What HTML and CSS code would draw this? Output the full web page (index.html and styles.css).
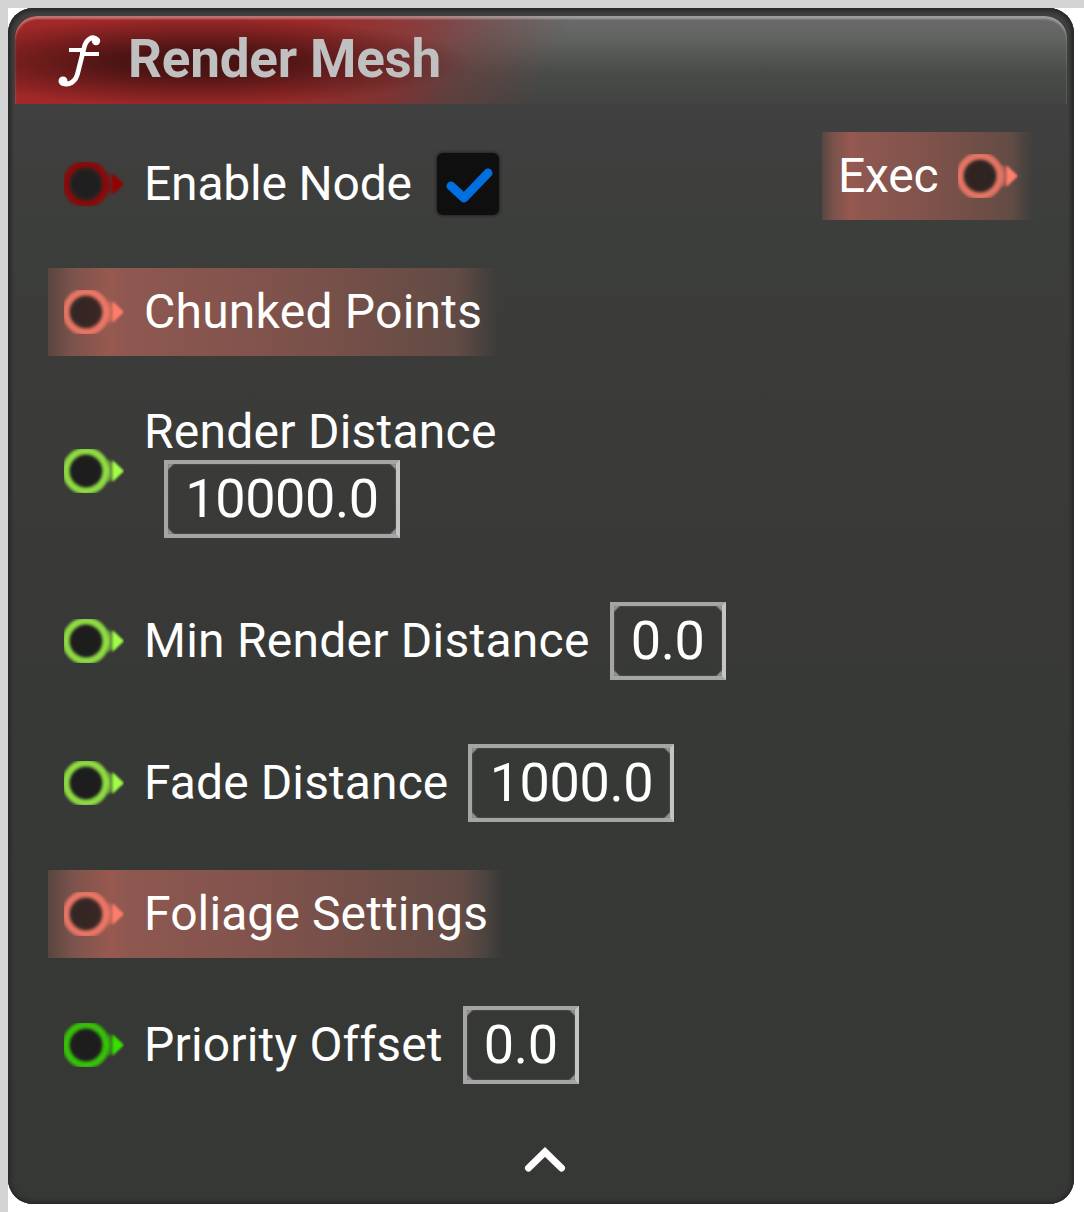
FILE: index.html
```
<!DOCTYPE html>
<html lang="en">
<head>
<meta charset="utf-8">
<title>Render Mesh</title>
<link rel="stylesheet" href="styles.css">
</head>
<body>
<svg class="defs" width="0" height="0" aria-hidden="true">
  <defs>
    <radialGradient id="hole" gradientUnits="userSpaceOnUse" cx="22" cy="22" r="18">
      <stop offset="0.7" stop-color="#111" stop-opacity=".68"/>
      <stop offset="1" stop-color="#111" stop-opacity=".4"/>
    </radialGradient>
    <symbol id="pin" viewBox="0 0 60 44">
      <g class="soft">
        <circle cx="22" cy="22" r="18" fill="url(#hole)"/>
        <circle cx="22" cy="22" r="20" fill="none" stroke="currentColor" stroke-width="8" opacity=".6"/>
        <circle cx="22" cy="22" r="20" fill="none" stroke="currentColor" stroke-width="4" opacity=".6"/>
        <path d="M44 10L57 22L44 34Z" fill="currentColor" opacity=".4"/>
        <path d="M48.500 11L60 22L48.500 33Z" fill="currentColor"/>
      </g>
    </symbol>
  </defs>
</svg>
<main class="node">
  <header class="header">
    <svg class="func" width="46" height="58" viewBox="0 0 46 58">
      <path d="M41 9C37 4 30 8 28 17L22 41C20 51 13 55 6 52" fill="none" stroke="#fff" stroke-width="4.800"/>
      <circle cx="40" cy="10" r="4.200" fill="#fff"/>
      <circle cx="7" cy="50" r="4.500" fill="#fff"/>
      <path d="M13 19H27M24 23H43" stroke="#fff" stroke-width="4"/>
    </svg>
    <h1 class="title">Render Mesh</h1>
  </header>
  <div class="body">
    <div class="inputs">
      <div class="row enable"><svg class="pin red"><use href="#pin"/></svg><span class="label tight">Enable Node</span>
        <span class="check"><svg width="62" height="62" viewBox="0 0 62 62"><path d="M14 33L27 45L51 20" fill="none" stroke="#0070e0" stroke-width="9" stroke-linecap="round" stroke-linejoin="round"/></svg></span>
      </div>
      <div class="row glow chunked"><svg class="pin salmon"><use href="#pin"/></svg><span class="label loose">Chunked Points</span></div>
      <div class="row distance"><svg class="pin lime"><use href="#pin"/></svg>
        <div class="stack"><span class="label loose">Render Distance</span><span class="field wide">10000.0</span></div>
      </div>
      <div class="row min"><svg class="pin lime"><use href="#pin"/></svg><span class="label loose">Min Render Distance</span><span class="field short">0.0</span></div>
      <div class="row fade"><svg class="pin lime"><use href="#pin"/></svg><span class="label even">Fade Distance</span><span class="field medium">1000.0</span></div>
      <div class="row glow foliage"><svg class="pin salmon"><use href="#pin"/></svg><span class="label even">Foliage Settings</span></div>
      <div class="row priority"><svg class="pin green"><use href="#pin"/></svg><span class="label snug">Priority Offset</span><span class="field short">0.0</span></div>
    </div>
    <div class="outputs">
      <div class="exec"><span class="label tight">Exec</span><svg class="pin salmon"><use href="#pin"/></svg></div>
    </div>
  </div>
  <footer class="footer">
    <svg width="42" height="28" viewBox="0 0 42 28"><path d="M4.500 22L21 6L37.500 22" fill="none" stroke="#fff" stroke-width="7" stroke-linecap="round"/></svg>
  </footer>
</main>
</body>
</html>
```
FILE: styles.css
```
* { box-sizing: border-box; }
html { background: #fff; }
body {
  margin: 0;
  width: 1084px;
  height: 1212px;
  overflow: hidden;
  border-top: 8px solid #d4d4d4;
  border-left: 8px solid #d4d4d4;
  font-family: Roboto, "Liberation Sans", sans-serif;
  color: #fff;
}
.defs { display: block; width: 0; height: 0; }
.soft { filter: blur(.8px); }
.node {
  width: 1066px;
  height: 1196px;
  padding: 8px 7px 0 7px;
  border-radius: 25px;
  background: linear-gradient(#404040 95px, #3c3e3b 220px, #3a3a39 480px, #373936 700px, #363835 1100px);
  box-shadow: inset 0 0 3px 2px #292929, inset 0 0 3px 4px #353535;
  display: flex;
  flex-direction: column;
}
.header {
  height: 88px;
  flex: none;
  padding: 14px 0 0 41px;
  display: flex;
  border-radius: 22px 22px 0 0;
  background:
    radial-gradient(ellipse 275px 44px at 180px 46px, rgba(60,16,15,.9), rgba(60,16,15,.82) 30%, rgba(60,16,15,.42) 65%, transparent),
    linear-gradient(115deg, #a22828 0, #9c2929 270px, rgba(150,44,44,.72) 370px, rgba(130,55,55,.4) 430px, transparent 505px),
    linear-gradient(#6b6b6b, #616361 25%, #494b48 65%, #424441);
  box-shadow: inset 0 3px 2px rgba(255,255,255,.34);
}
.func { flex: none; margin-top: 1px; }
.title {
  margin: 1px 0 0 26px;
  font-size: 53px;
  line-height: 56px;
  font-weight: 700;
  letter-spacing: -.2px;
  color: #c0c0c0;
  white-space: nowrap;
}
.body { display: flex; justify-content: space-between; padding: 28px 33px 0 33px; }
.inputs { display: flex; flex-direction: column; align-items: flex-start; padding-top: 8px; }
.row { display: flex; align-items: center; padding-left: 16px; height: 88px; }
.glow {
  width: 450px;
  background: linear-gradient(90deg, #57463f 0, #7b534c 24px, #98594f 62px, #8e5850 78px, #81534c 210px, #6e4e47 75%, #624b45 91%, #4b433f 96%, transparent);
}
.pin { width: 60px; height: 44px; flex: none; overflow: hidden; }
.red { color: #970000; }
.salmon { color: #ff7d6b; }
.lime { color: #a1ff46; }
.green { color: #38df00; }
.label { font-size: 48px; line-height: 56px; margin-left: 20px; white-space: nowrap; flex: none; }
.tight { letter-spacing: -.2px; }
.even { letter-spacing: .1px; }
.snug { letter-spacing: .17px; }
.loose { letter-spacing: .24px; }
.chunked { margin-top: 40px; }
.distance { height: 130px; margin-top: 50px; }
.stack { display: flex; flex-direction: column; align-items: flex-start; }
.stack .field { margin: 0 0 0 40px; }
.min { height: 78px; margin-top: 66px; }
.fade { height: 78px; margin-top: 64px; }
.foliage { width: 456px; margin-top: 48px; }
.priority { height: 78px; margin-top: 48px; }
.check { width: 62px; height: 62px; margin-left: 25px; border-radius: 6px; background: #0f0f0f; box-shadow: 0 0 3px 1px #252525; }
.check svg { display: block; }
.field {
  height: 78px;
  margin-left: 20px;
  border: 4px solid #a5a5a5;
  border-right-color: #c4c4c4;
  background:
    linear-gradient(135deg, #999 3px, transparent 5px) left top / 8px 8px no-repeat,
    linear-gradient(225deg, #999 3px, transparent 5px) right top / 8px 8px no-repeat,
    linear-gradient(45deg, #999 3px, transparent 5px) left bottom / 8px 8px no-repeat,
    linear-gradient(315deg, #999 3px, transparent 5px) right bottom / 8px 8px no-repeat;
  box-shadow: inset 0 0 2px #6a6a6a;
  display: flex;
  align-items: center;
  justify-content: center;
  font-size: 54px;
  line-height: 60px;
  letter-spacing: -.4px;
}
.wide { width: 236px; }
.medium { width: 206px; }
.short { width: 116px; }
.exec {
  width: 212px;
  height: 88px;
  display: flex;
  align-items: center;
  justify-content: space-between;
  padding-right: 16px;
  background: linear-gradient(90deg, #57463f 0, #7b534c 12px, #98594f 30px, #8e5850 38px, #81534c 100px, #6e4e47 160px, #624b45 190px, #4b433f 202px, transparent 212px);
}
.exec .label { margin-left: 16px; }
.footer { flex: 1; display: flex; justify-content: center; padding: 62px 0 0 7px; }
```
